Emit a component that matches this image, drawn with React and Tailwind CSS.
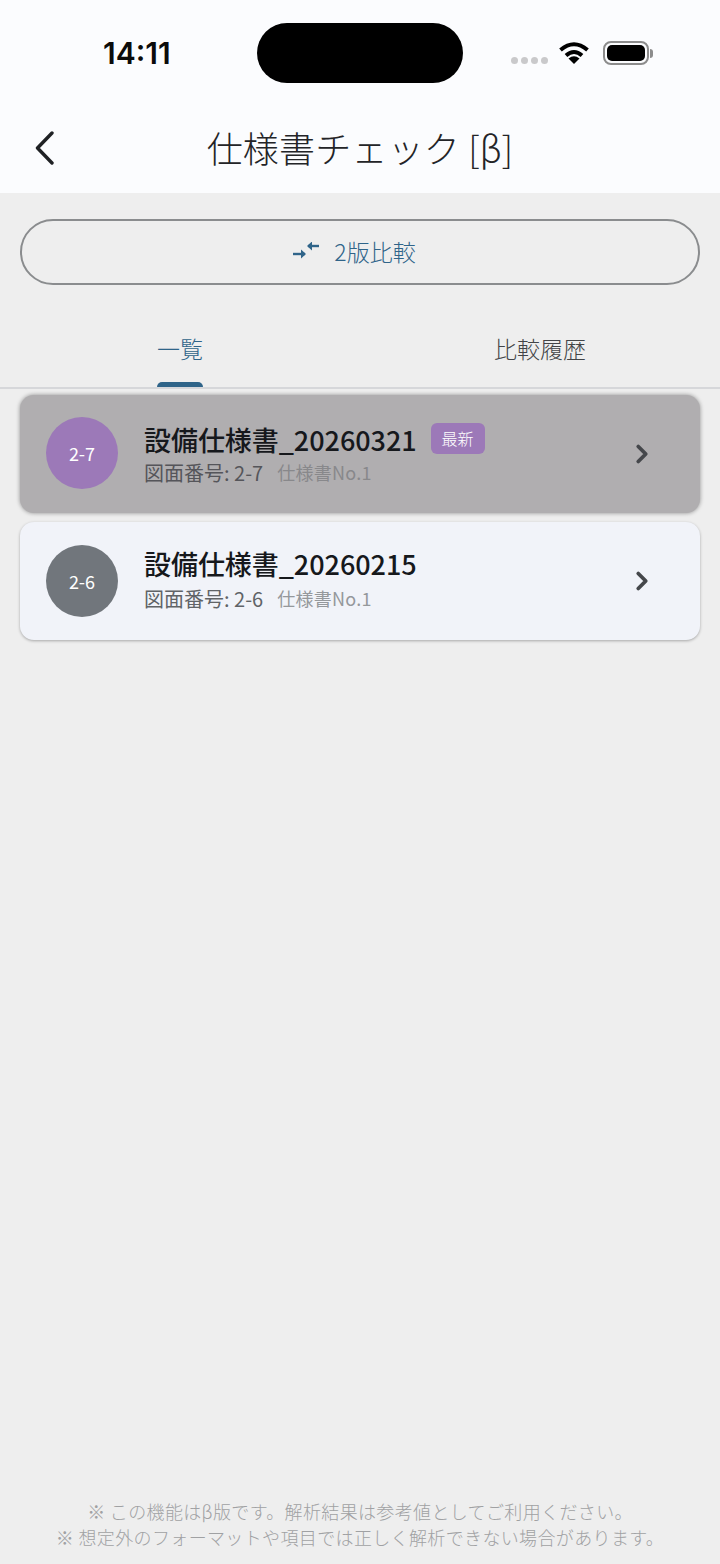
import { ChevronRight } from "lucide-react";

const jp = "font-['Noto_Sans_CJK_JP','Noto_Sans',sans-serif]";

const specs = [
  {
    no: "2-7",
    title: "設備仕様書_20260321",
    latest: true,
    card: "bg-[#b0aeb0] shadow-[0_0_4px_rgba(0,0,0,0.4)]",
    circle: "bg-[#9c79b8] -mt-[2px]",
    sub: "text-[#55555a]",
    doc: "text-[#88888b]",
  },
  {
    no: "2-6",
    title: "設備仕様書_20260215",
    latest: false,
    card: "bg-[#f1f3f9] shadow-[0_1px_3px_rgba(0,0,0,0.3)]",
    circle: "bg-[#71767c]",
    sub: "text-[#606367]",
    doc: "text-[#95989c]",
  },
];

function WifiIcon() {
  return (
    <svg width="32" height="24" viewBox="0 0 32 24" fill="none" stroke="#000" strokeWidth="4">
      <path d="M2.5 9 Q16 -2.5 29.5 9" />
      <path d="M8 14.5 Q16 7.5 24 14.5" />
      <path d="M16 23 L10.5 17.5 Q16 13 21.5 17.5 Z" fill="#000" stroke="none" />
    </svg>
  );
}

function BatteryIcon() {
  return (
    <div className="flex items-center">
      <div className="w-[46px] h-[24px] rounded-[8px] border-2 border-[#8c8c8c] p-[2px]">
        <div className="w-full h-full rounded-[5px] bg-black"></div>
      </div>
      <div className="w-[3px] h-[9px] ml-[1px] rounded-r-full bg-[#8c8c8c]"></div>
    </div>
  );
}

function StatusBar() {
  return (
    <div className="h-[106px] flex items-start">
      <div className="w-[257px] pt-[36px] pl-[103px] font-['Inter',sans-serif] text-[30px] leading-[34px] font-semibold text-[#0b0b0b]">
        14:11
      </div>
      <div className="w-[206px] h-[60px] mt-[23px] rounded-[30px] bg-black"></div>
      <div className="flex items-center pl-[48px] pt-[41px]">
        <div className="flex gap-[3px] mt-[14px] mr-[10px]">
          <div className="w-[7px] h-[7px] rounded-full bg-[#c9c9cb]"></div>
          <div className="w-[7px] h-[7px] rounded-full bg-[#c9c9cb]"></div>
          <div className="w-[7px] h-[7px] rounded-full bg-[#c9c9cb]"></div>
          <div className="w-[7px] h-[7px] rounded-full bg-[#c9c9cb]"></div>
        </div>
        <div className="mr-[13px]">
          <WifiIcon />
        </div>
        <BatteryIcon />
      </div>
    </div>
  );
}

function BackIcon() {
  return (
    <svg width="22" height="34" viewBox="0 0 22 34" fill="none" stroke="#1f2124" strokeWidth="3.4" strokeLinecap="round" strokeLinejoin="round">
      <path d="M18 2 L3.5 17 L18 32" />
    </svg>
  );
}

function CompareIcon() {
  return (
    <svg width="26" height="18" viewBox="0 0 26 18" fill="none" stroke="#2f6489" strokeWidth="2.4">
      <path d="M0 12 H12" />
      <path d="M8 7.5 L13 12 L8 16.5 Z" fill="#2f6489" stroke="none" />
      <path d="M15 4 H26" />
      <path d="M19 -0.5 L14 4 L19 8.5 Z" fill="#2f6489" stroke="none" />
    </svg>
  );
}

function SpecCard({ spec }) {
  return (
    <div className={`h-[118px] rounded-[14px] flex items-center pl-[26px] pr-[43px] ${spec.card}`}>
      <div className={`w-[72px] h-[72px] shrink-0 rounded-full flex items-center justify-center text-white text-[18px] ${spec.circle}`}>
        {spec.no}
      </div>
      <div className="flex-1 ml-[26px]">
        <div className={`flex items-center ${spec.latest ? "h-[36px] -mt-[2px]" : "h-[34px] -mt-[4px]"}`}>
          <span className="text-[27px] leading-[36px] font-medium tracking-[-0.05px] text-[#16181c]">{spec.title}</span>
          {spec.latest && (
            <span className="ml-[14px] -mt-[2px] w-[54px] h-[31px] rounded-[6px] bg-[#9c79b8] text-white text-[16px] leading-[31px] text-center font-light">
              最新
            </span>
          )}
        </div>
        <div className={`flex items-center h-[24px] ${spec.latest ? "mt-[3px]" : "mt-[6px]"}`}>
          <span className={`text-[20px] leading-[24px] ${spec.sub}`}>図面番号: {spec.no}</span>
          <span className={`ml-[14px] -mt-[2px] text-[18px] leading-[24px] tracking-[0.25px] ${spec.doc}`}>仕様書No.1</span>
        </div>
      </div>
      <ChevronRight size={30} strokeWidth={3} color="#45474b" />
    </div>
  );
}

export default function App() {
  return (
    <div className={`w-[720px] h-[1564px] flex flex-col bg-[#eeeeee] ${jp}`}>
      <div className="h-[193px] bg-[#fbfcfe]">
        <StatusBar />
        <div className="h-[87px] flex items-center relative">
          <div className="absolute left-[34px] top-[25px]">
            <BackIcon />
          </div>
          <div className="w-full text-center text-[36px] leading-[50px] font-light tracking-[0.2px] text-[#232427] pb-[6px]">
            仕様書チェック [β]
          </div>
        </div>
      </div>

      <div className="px-[20px] pt-[26px]">
        <button className="w-full h-[66px] rounded-[33px] border-2 border-[#8a8c8e] flex items-center justify-center gap-[15px] pr-[11px] pb-[2px] text-[23px] font-light text-[#2f6489]">
          <CompareIcon />
          <span>2版比較</span>
        </button>
      </div>

      <div className="mt-[35px] h-[69px] flex border-b-2 border-[#d6d7da]">
        <div className="w-[360px] flex flex-col items-center">
          <div className="h-[56px] flex items-center text-[23px] font-light text-[#2f6489]">一覧</div>
          <div className="w-[46px] h-[5px] mt-auto rounded-t-[5px] bg-[#2f6489]"></div>
        </div>
        <div className="w-[360px] h-[56px] flex items-center justify-center text-[23px] font-light text-[#424447]">
          比較履歴
        </div>
      </div>

      <div className="px-[20px] pt-[6px] flex flex-col gap-[9px]">
        {specs.map((spec) => (
          <SpecCard key={spec.no} spec={spec} />
        ))}
      </div>

      <div className="mt-auto pb-[14px] text-center text-[18px] leading-[26px] font-light tracking-[0.36px] text-[#a0a1a3]">
        <p>※ この機能はβ版です。解析結果は参考値としてご利用ください。</p>
        <p>※ 想定外のフォーマットや項目では正しく解析できない場合があります。</p>
      </div>
    </div>
  );
}
